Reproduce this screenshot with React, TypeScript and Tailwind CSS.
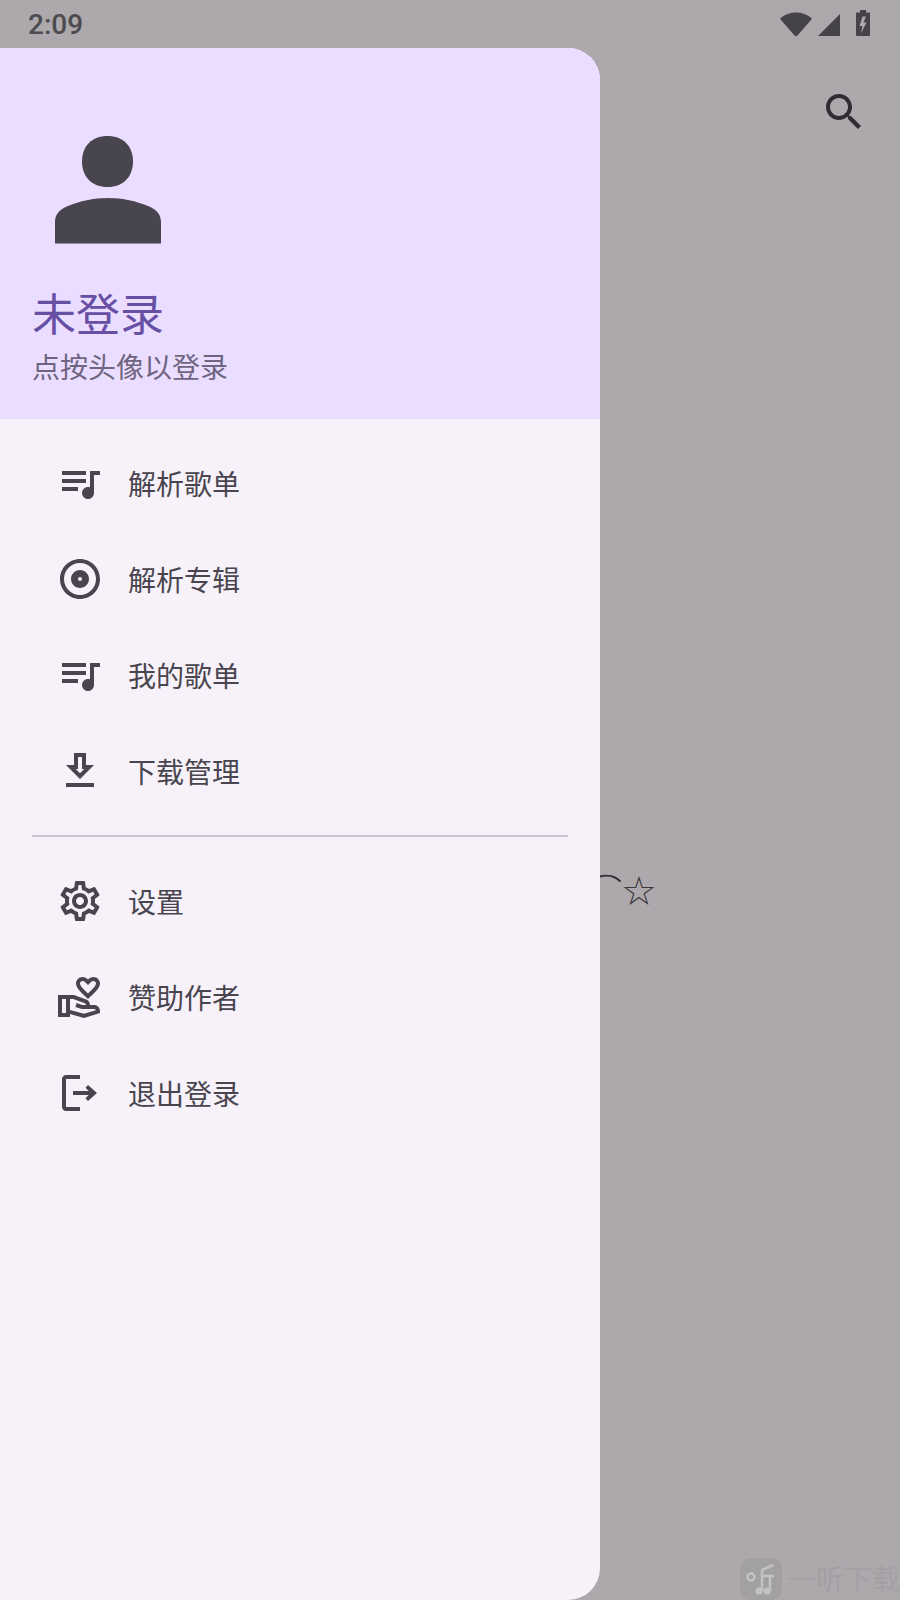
const font = "font-['Noto_Sans_CJK_SC','Noto_Sans',sans-serif]";

const icons = {
  queue:
    "M15 6H3v2h12V6zm0 4H3v2h12v-2zM3 16h8v-2H3v2zM17 6v8.18c-.31-.11-.65-.18-1-.18-1.66 0-3 1.34-3 3s1.34 3 3 3 3-1.34 3-3V8h3V6h-5z",
  album:
    "M12 2C6.48 2 2 6.48 2 12s4.48 10 10 10 10-4.48 10-10S17.52 2 12 2zm0 18c-4.42 0-8-3.58-8-8s3.58-8 8-8 8 3.58 8 8-3.58 8-8 8zm0-12.5c-2.49 0-4.5 2.01-4.5 4.5s2.01 4.5 4.5 4.5 4.5-2.01 4.5-4.5-2.01-4.5-4.5-4.5zm0 5.5c-.55 0-1-.45-1-1s.45-1 1-1 1 .45 1 1-.45 1-1 1z",
  download: "M19 9h-4V3H9v6H5l7 7 7-7zm-8 2V5h2v6h1.17L12 13.17 9.83 11H11zm-6 7h14v2H5z",
  settings:
    "M19.43 12.98c.04-.32.07-.64.07-.98 0-.34-.03-.66-.07-.98l2.11-1.65c.19-.15.24-.42.12-.64l-2-3.46c-.09-.16-.26-.25-.44-.25-.06 0-.12.01-.17.03l-2.49 1c-.52-.4-1.08-.73-1.69-.98l-.38-2.65C14.46 2.18 14.25 2 14 2h-4c-.25 0-.46.18-.49.42l-.38 2.65c-.61.25-1.17.59-1.69.98l-2.49-1c-.06-.02-.12-.03-.18-.03-.17 0-.34.09-.43.25l-2 3.46c-.13.22-.07.49.12.64l2.11 1.65c-.04.32-.07.65-.07.98 0 .33.03.66.07.98l-2.11 1.65c-.19.15-.24.42-.12.64l2 3.46c.09.16.26.25.44.25.06 0 .12-.01.17-.03l2.49-1c.52.4 1.08.73 1.69.98l.38 2.65c.03.24.24.42.49.42h4c.25 0 .46-.18.49-.42l.38-2.65c.61-.25 1.17-.59 1.69-.98l2.49 1c.06.02.12.03.18.03.17 0 .34-.09.43-.25l2-3.46c.12-.22.07-.49-.12-.64l-2.11-1.65zm-1.98-1.71c.04.31.05.52.05.73 0 .21-.02.43-.05.73l-.14 1.13.89.7 1.08.84-.7 1.21-1.27-.51-1.04-.42-.9.68c-.43.32-.84.56-1.25.73l-1.06.43-.16 1.13-.2 1.35h-1.4l-.19-1.35-.16-1.13-1.06-.43c-.43-.18-.83-.41-1.23-.71l-.91-.7-1.06.43-1.27.51-.7-1.21 1.08-.84.89-.7-.14-1.13c-.03-.31-.05-.54-.05-.74s.02-.43.05-.73l.14-1.13-.89-.7-1.08-.84.7-1.21 1.27.51 1.04.42.9-.68c.43-.32.84-.56 1.25-.73l1.06-.43.16-1.13.2-1.35h1.39l.19 1.35.16 1.13 1.06.43c.43.18.83.41 1.23.71l.91.7 1.06-.43 1.27-.51.7 1.21-1.07.85-.89.7.14 1.13zM12 8c-2.21 0-4 1.79-4 4s1.79 4 4 4 4-1.79 4-4-1.79-4-4-4zm0 6c-1.1 0-2-.9-2-2s.9-2 2-2 2 .9 2 2-.9 2-2 2z",
  donate:
    "M16 13c3.09-2.81 6-5.44 6-7.7C22 3.45 20.55 2 18.7 2c-1.04 0-2.05.49-2.7 1.25C15.34 2.49 14.34 2 13.3 2 11.45 2 10 3.45 10 5.3c0 2.26 2.91 4.89 6 7.7zm-2.7-9c.44 0 .89.21 1.18.55L16 6l1.52-1.45c.29-.34.74-.55 1.18-.55.74 0 1.3.56 1.3 1.3 0 1.12-2.04 3.17-4 4.99-1.96-1.82-4-3.87-4-4.99 0-.74.56-1.3 1.3-1.3zM19 16h-2c0-1.2-.75-2.28-1.87-2.7L8.97 11H1v11h6v-1.44l7 1.94 8-2.5v-1c0-1.66-1.34-3-3-3zM3 20v-7h2v7H3zm10.97.41L7 18.5V13h1.61l5.82 2.17c.34.13.57.46.57.83 0 0-1.99-.05-2.3-.15l-2.38-.79-.63 1.9 2.38.79c.51.17 1.04.26 1.58.26H19c.39 0 .74.23.9.56l-5.93 1.85z",
  logout:
    "M5 3H12V5H5V19H12V21H5C3.900 21 3 20.100 3 19V5C3 3.900 3.900 3 5 3ZM16 8L20.500 12L16 16L14.700 14.600L16.400 13H8.500V11H16.400L14.700 9.400Z",
};

function MenuRow({ icon, label }: { icon: string; label: string }) {
  return (
    <div className="flex h-24 items-center pl-14">
      <svg viewBox="0 0 24 24" className="h-12 w-12 fill-[#49454f]">
        <path d={icon} />
      </svg>
      <span className="ml-6 text-[28px] text-[#49454f]">{label}</span>
    </div>
  );
}

export default function App() {
  return (
    <div className={`${font} flex h-[1600px] w-[900px] flex-col overflow-hidden bg-[#aca8ac]`}>
      <div className="flex h-12 items-center justify-between pl-7 pr-[30px]">
        <span className="mt-0.5 font-['Roboto'] text-[28px] font-medium text-[#4d4a50]">2:09</span>
        <div className="flex items-center">
          <svg viewBox="0 0 32 25" className="h-[25px] w-8 fill-[#454249]">
            <path d="M.6 7.600C.1 7.100.1 6.400.7 6 5 2.500 10.300.6 16 .6S27 2.500 31.300 6c.6.4.6 1.100.1 1.600L17.500 23.500c-.8.9-2.200.9-3 0z" />
          </svg>
          <svg viewBox="0 0 22 22" className="ml-1.5 mt-0.5 h-[22px] w-[22px] fill-[#454249]">
            <path d="M22 0v22H0z" />
          </svg>
          <svg viewBox="0 0 14 26" className="-mt-0.5 ml-4 h-[26px] w-3.5 fill-[#454249]">
            <path fillRule="evenodd" d="M4 0h6v2.500h3c.6 0 1 .4 1 1V25c0 .6-.4 1-1 1H1c-.6 0-1-.4-1-1V3.500c0-.6.4-1 1-1h3zM10 6.500H6.500L3.500 16h3L5 23.500l5.500-11H7.500z" />
          </svg>
        </div>
      </div>
      <div className="flex min-h-0 flex-1">
        <aside className="flex w-[600px] flex-col overflow-hidden rounded-r-[32px] bg-[#f7f2fa]">
          <header className="flex h-[371px] flex-col bg-[#eaddff] pl-8 pt-[61px]">
            <svg viewBox="0 0 160 160" className="-ml-1 h-40 w-40 fill-[#49454f]">
              <path d="M79.500 27C95 27 105 37 105 52.500C105 68 95 78 79.500 78C64 78 54 68 54 52.500C54 37 64 27 79.500 27Z" />
              <path d="M27 134.500V113C27 105 32 100 40 97C52 92 65 89 80 89C95 89 108 92 120 97C128 100 133 105 133 113V134.500Z" />
            </svg>
            <div className="mt-[13px] text-[44px] leading-[60px] text-[#6750a4]">未登录</div>
            <div className="mt-1 text-[28px] leading-10 text-[#6f6580]">点按头像以登录</div>
          </header>
          <nav className="pt-4">
            <MenuRow icon={icons.queue} label="解析歌单" />
            <MenuRow icon={icons.album} label="解析专辑" />
            <MenuRow icon={icons.queue} label="我的歌单" />
            <MenuRow icon={icons.download} label="下载管理" />
            <div className="mx-8 my-4 h-0.5 bg-[#cac4d0]" />
            <MenuRow icon={icons.settings} label="设置" />
            <MenuRow icon={icons.donate} label="赞助作者" />
            <MenuRow icon={icons.logout} label="退出登录" />
          </nav>
        </aside>
        <div className="relative flex-1">
          <svg viewBox="0 0 24 24" className="absolute left-[220px] top-10 h-12 w-12 fill-[#2f2c33]">
            <path d="M15.500 14h-.79l-.28-.27C15.410 12.590 16 11.110 16 9.500 16 5.910 13.090 3 9.500 3S3 5.910 3 9.500 5.910 16 9.500 16c1.610 0 3.090-.59 4.230-1.570l.27.28v.79l5 4.990L20.490 19l-4.990-5zm-6 0C7.010 14 5 11.990 5 9.500S7.010 5 9.500 5 14 7.010 14 9.500 11.990 14 9.500 14z" />
          </svg>
          <svg viewBox="0 0 22 10" className="absolute left-0 top-[825px] h-2.5 w-[22px] fill-none stroke-[#2f2c33] stroke-2">
            <path d="M0 3.600C7 1.500 15 3 20.500 8.500" />
          </svg>
          <span className="absolute left-[21px] top-[819px] font-['DejaVu_Sans'] text-[40px] leading-[48px] text-[#3a373e]">☆</span>
          <div className="absolute left-[140px] top-[1510px] h-[42px] w-[42px] rounded-[10px] bg-[#a3a0a4]">
            <svg viewBox="0 0 42 42" className="h-[42px] w-[42px] fill-none stroke-[#c5c2c5] stroke-[2.5]">
              <circle cx="11" cy="19" r="3.500" />
              <path d="M22 12 33 7M22 12v21M22 18H34M30 18v15" />
              <circle cx="19" cy="33" r="3.500" className="fill-[#c5c2c5] stroke-none" />
              <circle cx="27" cy="33" r="3.500" className="fill-[#c5c2c5] stroke-none" />
            </svg>
          </div>
          <span className="absolute left-[188px] top-[1510px] whitespace-nowrap text-[28px] leading-10 text-[#a3a0a4]">一听下载</span>
        </div>
      </div>
    </div>
  );
}
